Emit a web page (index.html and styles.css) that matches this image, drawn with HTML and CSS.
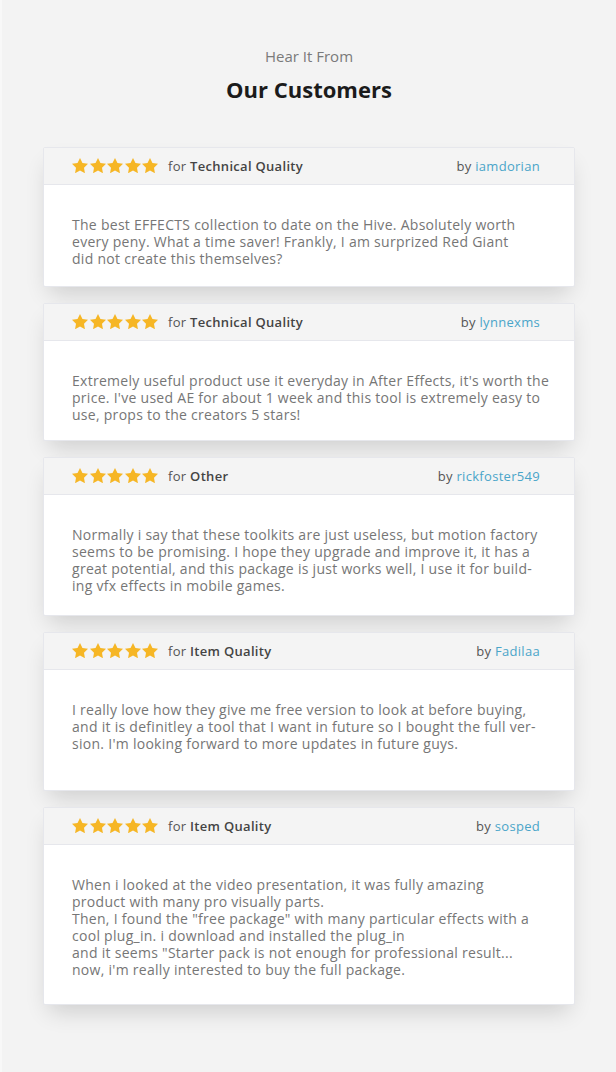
FILE: index.html
```html
<!DOCTYPE html>
<html lang="en">
<head>
    <meta charset="UTF-8">
    <meta name="viewport" content="width=device-width, initial-scale=1.0">
    <title>Our Customers</title>
    <link rel="stylesheet" href="styles.css">
</head>
<body>
    <svg class="hidden" xmlns="http://www.w3.org/2000/svg">
        <symbol id="star" viewBox="2 2 20 19.1">
            <path d="M12 2l3.09 6.26L22 9.27l-5 4.87 1.18 6.88L12 17.77l-6.18 3.25L7 14.140 2 9.27l6.91-1.01L12 2z"/>
        </symbol>
    </svg>

    <div class="page">
        <div class="section-title">
            <p class="subtitle">Hear It From</p>
            <h2>Our Customers</h2>
        </div>

        <div class="reviews">
            <div class="review">
                <div class="review-head">
                    <div class="stars">
                        <svg><use href="#star"/></svg><svg><use href="#star"/></svg><svg><use href="#star"/></svg><svg><use href="#star"/></svg><svg><use href="#star"/></svg>
                    </div>
                    <span class="for">for <b>Technical Quality</b></span>
                    <span class="by">by <a href="#">iamdorian</a></span>
                </div>
                <div class="review-body h-101">
                    <p>The best EFFECTS collection to date on the Hive. Absolutely worth<br>
                    every peny. What a time saver! Frankly, I am surprized Red Giant<br>
                    did not create this themselves?</p>
                </div>
            </div>

            <div class="review">
                <div class="review-head">
                    <div class="stars">
                        <svg><use href="#star"/></svg><svg><use href="#star"/></svg><svg><use href="#star"/></svg><svg><use href="#star"/></svg><svg><use href="#star"/></svg>
                    </div>
                    <span class="for">for <b>Technical Quality</b></span>
                    <span class="by">by <a href="#">lynnexms</a></span>
                </div>
                <div class="review-body h-99">
                    <p>Extremely useful product use it everyday in After Effects, it's worth the<br>
                    price. I've used AE for about 1 week and this tool is extremely easy to<br>
                    use, props to the creators 5 stars!</p>
                </div>
            </div>

            <div class="review">
                <div class="review-head">
                    <div class="stars">
                        <svg><use href="#star"/></svg><svg><use href="#star"/></svg><svg><use href="#star"/></svg><svg><use href="#star"/></svg><svg><use href="#star"/></svg>
                    </div>
                    <span class="for">for <b>Other</b></span>
                    <span class="by">by <a href="#">rickfoster549</a></span>
                </div>
                <div class="review-body h-120">
                    <p>Normally i say that these toolkits are just useless, but motion factory<br>
                    seems to be promising. I hope they upgrade and improve it, it has a<br>
                    great potential, and this package is just works well, I use it for build-<br>
                    ing vfx effects in mobile games.</p>
                </div>
            </div>

            <div class="review">
                <div class="review-head">
                    <div class="stars">
                        <svg><use href="#star"/></svg><svg><use href="#star"/></svg><svg><use href="#star"/></svg><svg><use href="#star"/></svg><svg><use href="#star"/></svg>
                    </div>
                    <span class="for">for <b>Item Quality</b></span>
                    <span class="by">by <a href="#">Fadilaa</a></span>
                </div>
                <div class="review-body h-120">
                    <p>I really love how they give me free version to look at before buying,<br>
                    and it is definitley a tool that I want in future so I bought the full ver-<br>
                    sion. I'm looking forward to more updates in future guys.</p>
                </div>
            </div>

            <div class="review">
                <div class="review-head">
                    <div class="stars">
                        <svg><use href="#star"/></svg><svg><use href="#star"/></svg><svg><use href="#star"/></svg><svg><use href="#star"/></svg><svg><use href="#star"/></svg>
                    </div>
                    <span class="for">for <b>Item Quality</b></span>
                    <span class="by">by <a href="#">sosped</a></span>
                </div>
                <div class="review-body h-159">
                    <p>When i looked at the video presentation, it was fully amazing<br>
                    product with many pro visually parts.<br>
                    Then, I found the "free package" with many particular effects with a<br>
                    cool plug_in. i download and installed the plug_in<br>
                    and it seems "Starter pack is not enough for professional result...<br>
                    now, i'm really interested to buy the full package.</p>
                </div>
            </div>
        </div>
    </div>
</body>
</html>
```

FILE: styles.css
```css
*{
    box-sizing: border-box;
    margin: 0px;
    padding: 0px;
}
.hidden{
    display: none;
}
body{
    background: #f3f3f3;
    font-family: "Open Sans", "Liberation Sans", sans-serif;
}
.page{
    min-height: 1072px;
    border-left: 2px solid #f8f8f8;
    padding: 46px 41px 60px 41px;
}
.section-title{
    text-align: center;
    margin-bottom: 44px;
}
.subtitle{
    font-size: 15px;
    line-height: 20px;
    color: #7a7a7a;
}
.section-title h2{
    margin-top: 9px;
    font-size: 22px;
    line-height: 28px;
    font-weight: 700;
    color: #1b1b1b;
}
.reviews{
    display: flex;
    flex-direction: column;
    gap: 16px;
}
.review{
    background: #fff;
    border: 1px solid #e6e7ec;
    border-radius: 2px;
    box-shadow: 0 12px 22px -6px rgba(0, 0, 0, .16);
}
.review-head{
    display: flex;
    align-items: center;
    height: 37px;
    padding: 0 34px 1px 28px;
    background: #f4f4f4;
    border-bottom: 1px solid #e6e7ec;
    font-size: 13px;
    letter-spacing: .3px;
    color: #555;
}
.stars{
    display: flex;
    gap: 1.5px;
    margin-right: 10px;
}
.stars svg{
    width: 16px;
    height: 15.3px;
    fill: #f6b625;
}
.for b{
    font-weight: 600;
    color: #444;
}
.by{
    margin-left: auto;
}
.by a{
    color: #4aa5c9;
    text-decoration: none;
}
.review-body{
    padding: 31px 16px 0 28px;
}
.review-body p{
    font-size: 14px;
    line-height: 17px;
    letter-spacing: .28px;
    color: #767676;
}
.h-99{
    height: 99px;
}
.h-101{
    height: 101px;
}
.h-120{
    height: 120px;
}
.h-159{
    height: 159px;
}
```
